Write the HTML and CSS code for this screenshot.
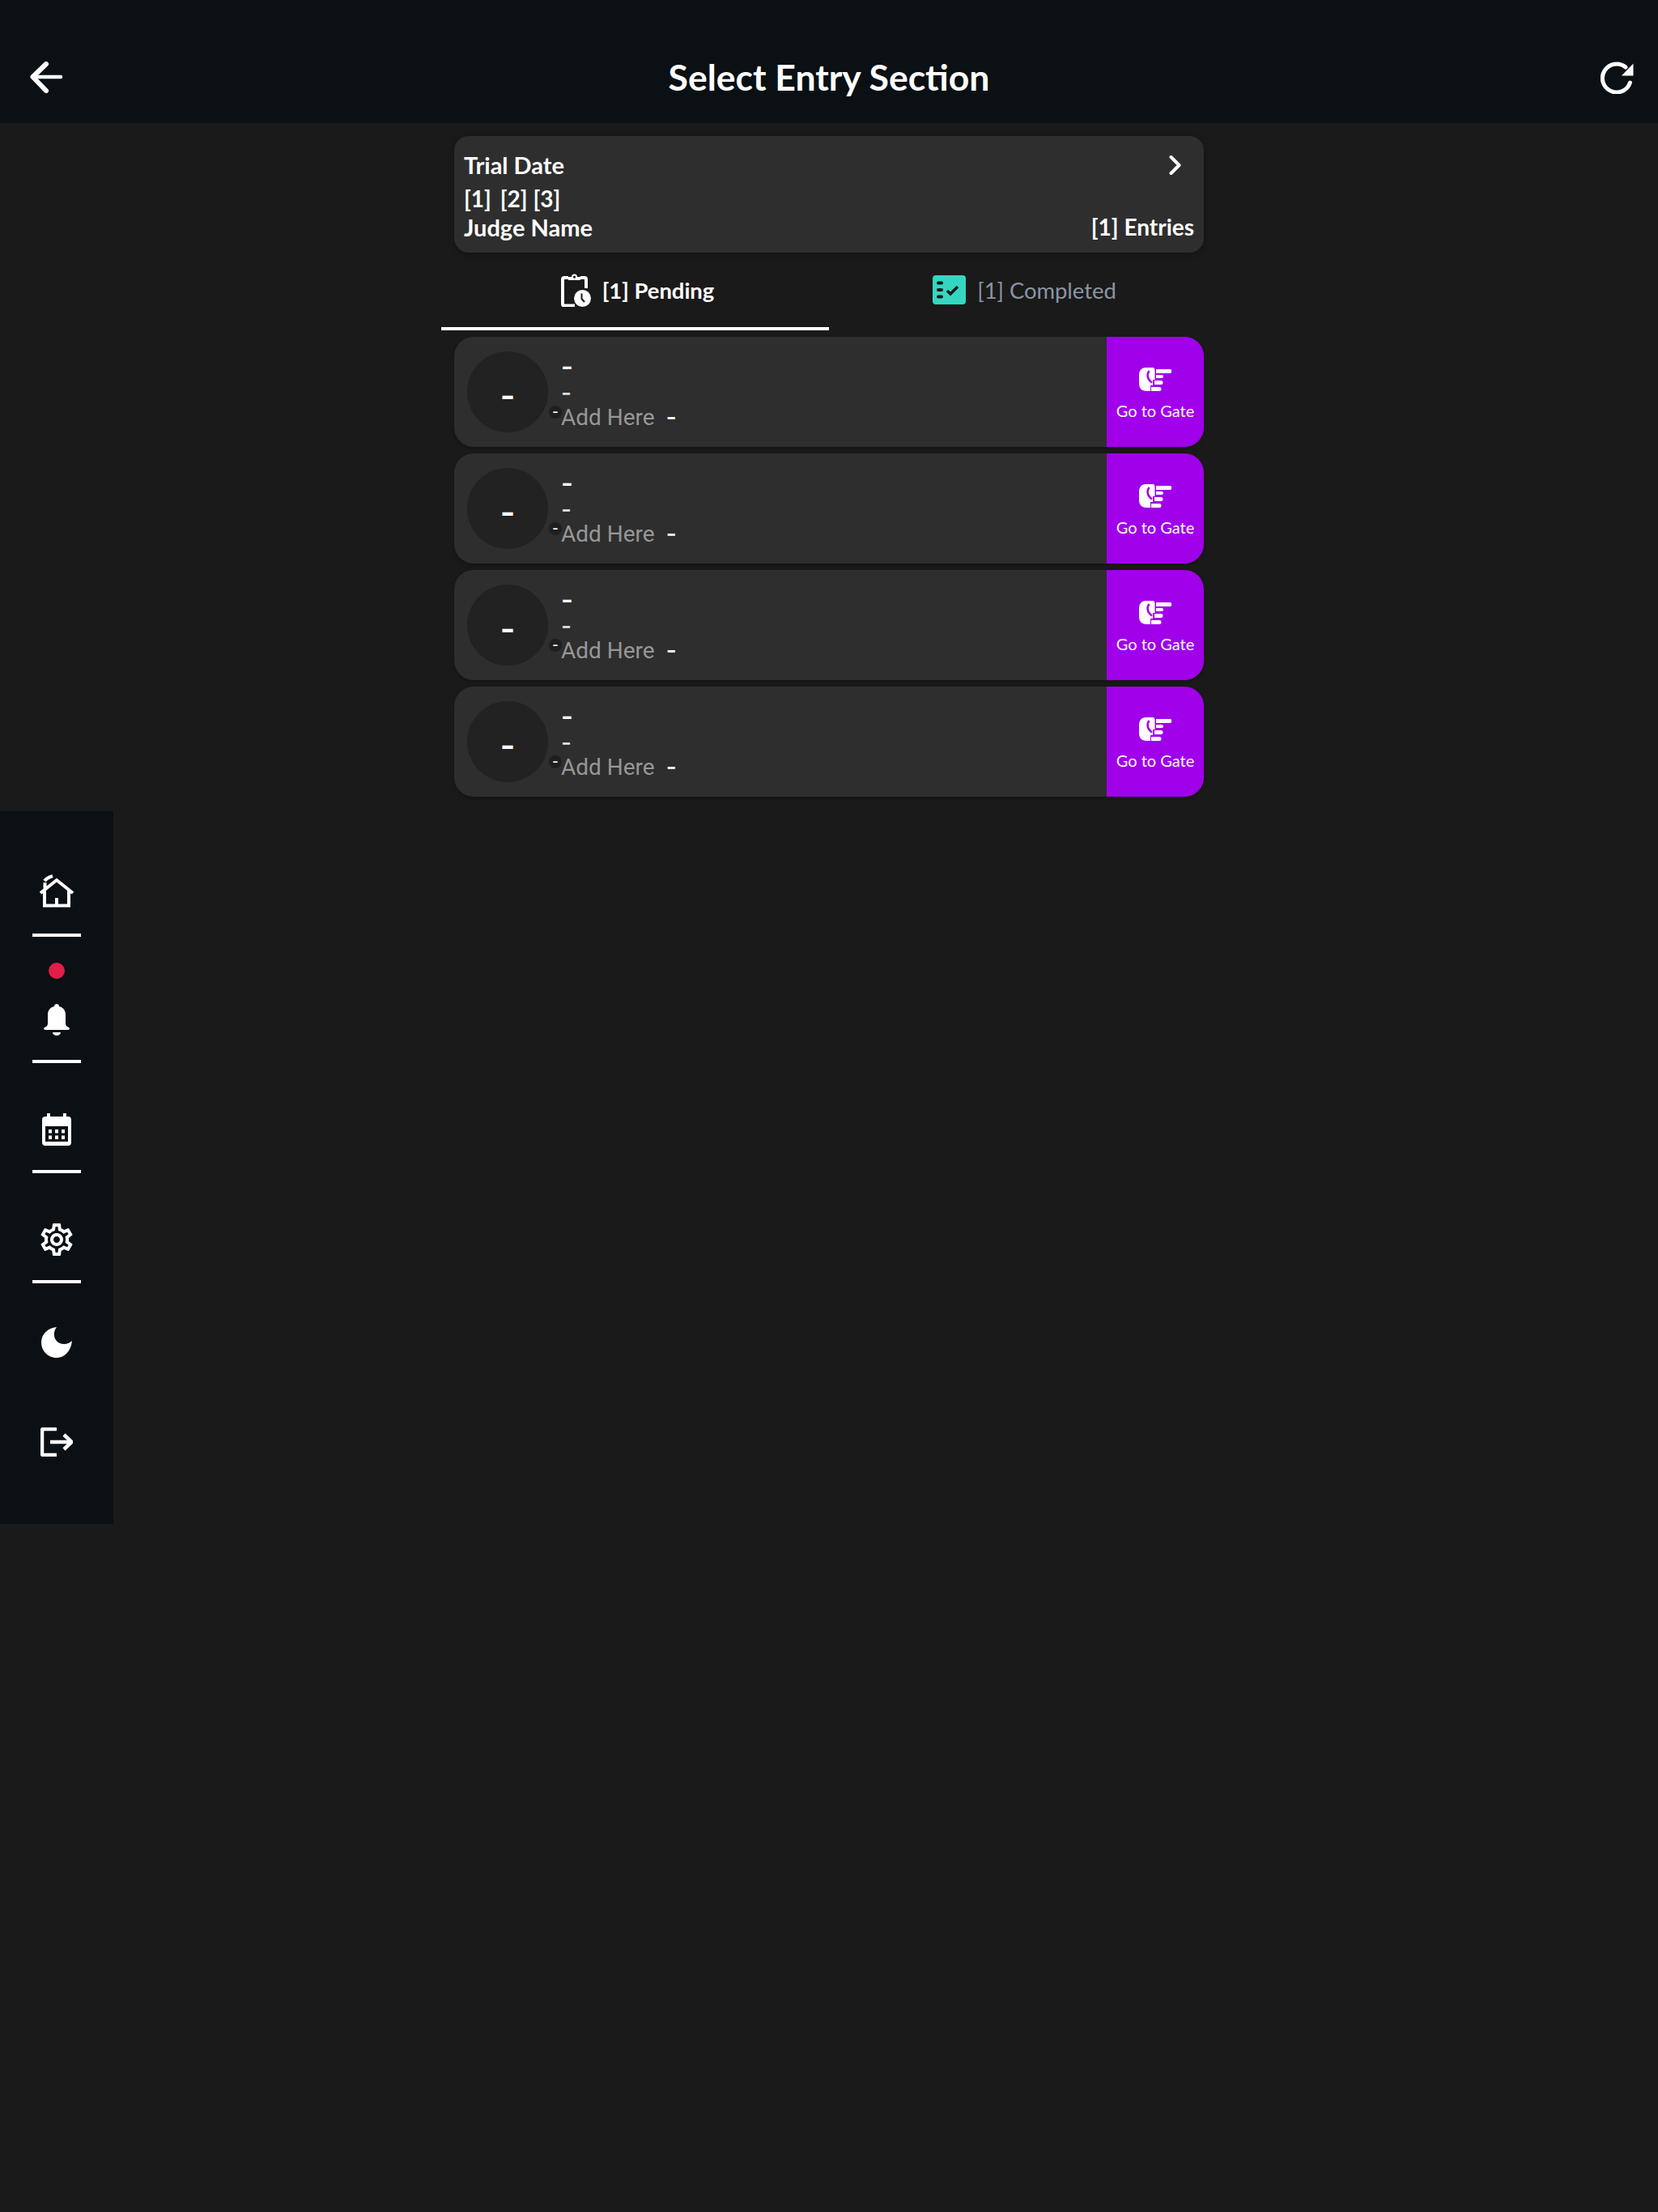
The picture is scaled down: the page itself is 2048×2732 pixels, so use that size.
FILE: index.html
```html
<!DOCTYPE html>
<html lang="en">
<head>
    <meta charset="UTF-8">
    <meta name="viewport" content="width=device-width, initial-scale=1.0">
    <title>Select Entry Section</title>
    <link rel="stylesheet" href="styles.css">
</head>
<body>

    <!-- Shared hand icon for the gate buttons -->
    <svg class="defs" width="0" height="0">
        <symbol id="hand" viewBox="0 0 40 30">
            <path d="M8 0h9c2 0 2.500 2 2.500 4v11H17v7h-3v7H9c-6 0-9-4-9-9V9c0-5 3-9 8-9zM21 2h17a2.500 2.500 0 0 1 0 5H21zM21 9h7a2 2 0 0 1 0 4h-7zM19 16h8a2.500 2.500 0 0 1 0 5h-8zM15 24h10a2.500 2.500 0 0 1 0 5H15z"/>
            <path class="notch" d="M12.500 4C9.500 8 9.500 14 16 18.500"/>
        </symbol>
    </svg>

    <header class="topbar">
        <svg class="back-icon" viewBox="0 0 41 40"><path class="shaft" d="M4 19h34"/><path d="M20 3 3.500 19 20 36"/></svg>
        <h1>Select Entry Section</h1>
        <svg class="refresh-icon" viewBox="0 0 41 40"><path class="arc" d="M31 7A17.500 17.500 0 1 0 36.500 26"/><path d="M40.500 2.500v15H26z"/></svg>
    </header>

    <!-- Side rail sits over the page -->
    <nav class="rail">
        <svg class="nav-home" viewBox="0 0 44 41"><path d="M2 23 22 7l20 16M7 20v18.500h30V20M22 29v9M7.500 19v-9"/><path d="M7 8q3-4 10-6"/></svg>
        <span class="rail-line line-home"></span>
        <span class="red-dot"></span>
        <svg class="nav-bell" viewBox="0 0 32 39"><path d="M16 0c1.800 0 3 1.200 3 3 4.800 1.200 8 5 8 10v11c0 2 1 3.500 3 4.500 1.500.7 2 1.500 2 2s-.8 1.500-2 1.500H2c-1.200 0-2-.8-2-1.500s.5-1.300 2-2c2-1 3-2.500 3-4.500V13c0-5 3.200-8.800 8-10 0-1.800 1.200-3 3-3zM11 35h10c0 2-2 4-5 4s-5-2-5-4z"/></svg>
        <span class="rail-line"></span>
        <svg class="nav-calendar" viewBox="0 0 36 40"><path fill-rule="evenodd" d="M6 0h4v4h16V0h4v4h2a4 4 0 0 1 4 4v28a4 4 0 0 1-4 4H4a4 4 0 0 1-4-4V8a4 4 0 0 1 4-4h2zM4 16v19h28V16zM8 20h4v4.500H8zM16 20h4v4.500h-4zM24 20h4v4.500h-4zM8 27.500h4V32H8zM16 27.500h4V32h-4zM24 27.500h4V32h-4z"/></svg>
        <span class="rail-line"></span>
        <svg class="nav-gear" viewBox="2 2 20 20"><path d="M19.430 12.980c.04-.32.07-.64.07-.98s-.03-.66-.07-.98l2.110-1.650c.19-.15.24-.42.12-.64l-2-3.460c-.12-.22-.39-.3-.61-.22l-2.490 1c-.52-.4-1.080-.73-1.690-.98l-.38-2.650C14.460 2.180 14.250 2 14 2h-4c-.25 0-.46.18-.49.42l-.38 2.650c-.61.25-1.170.59-1.690.98l-2.490-1c-.23-.09-.49 0-.61.22l-2 3.460c-.13.22-.07.49.12.64l2.110 1.650c-.04.32-.07.65-.07.98s.03.66.07.98l-2.110 1.650c-.19.15-.24.42-.12.64l2 3.460c.12.22.39.3.61.22l2.490-1c.52.4 1.080.73 1.690.98l.38 2.650c.03.24.24.42.49.42h4c.25 0 .46-.18.49-.42l.38-2.650c.61-.25 1.170-.59 1.690-.98l2.490 1c.23.09.49 0 .61-.22l2-3.460c.12-.22.07-.49-.12-.64l-2.110-1.650zM17.450 11.270c.04.31.05.52.05.73 0 .21-.02.43-.05.73l-.14 1.130.89.7 1.080.84-.7 1.210-1.270-.51-1.040-.42-.9.68c-.43.32-.84.56-1.250.73l-1.060.43-.16 1.130-.2 1.350h-1.400l-.19-1.350-.16-1.130-1.060-.43c-.43-.18-.83-.41-1.230-.71l-.91-.7-1.060.43-1.270.51-.7-1.210 1.080-.84.89-.7-.14-1.130c-.03-.31-.05-.54-.05-.74s.02-.43.05-.73l.14-1.130-.89-.7-1.080-.84.7-1.210 1.270.51 1.040.42.9-.68c.43-.32.84-.56 1.250-.73l1.060-.43.16-1.130.2-1.350h1.390l.19 1.350.16 1.130 1.060.43c.43.18.83.41 1.230.71l.91.7 1.060-.43 1.270-.51.7 1.210-1.070.85-.89.7.14 1.130zM12 8c-2.210 0-4 1.790-4 4s1.790 4 4 4 4-1.790 4-4-1.790-4-4-4zm0 6c-1.100 0-2-.9-2-2s.9-2 2-2 2 .9 2 2-.9 2-2 2z"/></svg>
        <span class="rail-line"></span>
        <svg class="nav-moon" viewBox="0 0 38 38"><path d="M19 0c-4 5-4 12-1 16 4 6 14 7 20 1-1 12-9 21-19 21C8 38 0 29 0 19 0 9 8 1 19 0z"/></svg>
        <svg class="nav-logout" viewBox="0 0 40 36"><path d="M20 2H3.500A1.500 1.500 0 0 0 2 3.500v29A1.500 1.500 0 0 0 3.500 34H20M12 18h26M29 9l9.500 9-9.500 9"/></svg>
    </nav>

    <main class="content">
        <section class="trial-card">
            <div class="trial-row date-row">
                <span>Trial Date</span>
                <svg class="chevron" viewBox="0 0 15 24"><path d="M2.500 2 12.500 12 2.500 22"/></svg>
            </div>
            <div class="trial-row numbers-row"><span class="num-first">[1]</span><span class="num-mid">[2]</span><span>[3]</span></div>
            <div class="trial-row">
                <span>Judge Name</span>
                <span class="entries-count">[1] Entries</span>
            </div>
        </section>

        <div class="tabs">
            <div class="tab active">
                <svg class="tab-clip" viewBox="0 0 37 42"><path class="clip-line" d="M9 6H4a2 2 0 0 0-2 2v30.500a2 2 0 0 0 2 2h13M24 6h5a2 2 0 0 1 2 2v11"/><path fill-rule="evenodd" d="M9 9V5h4a3.500 3.500 0 0 1 7 0h4v4zM16.500 3.500a1.600 1.600 0 1 0 0 3.200 1.600 1.600 0 0 0 0-3.200z"/><circle cx="26.500" cy="31.500" r="10.500"/><path class="clock-hand" d="M25.500 25.500v6.500l3.500 4"/></svg>
                <span>[1] Pending</span>
            </div>
            <div class="tab">
                <svg class="tab-check" viewBox="0 0 41 36"><rect width="41" height="36" rx="4"/><path class="check-dots" d="M7 9.500h4M7 18h4M7 26.500h4"/><path class="check-mark" d="M18 19l4 4 9-9"/></svg>
                <span>[1] Completed</span>
            </div>
        </div>

        <div class="entry-list">
            <div class="entry">
                <div class="entry-info">
                    <div class="avatar">-<span class="mini-badge">-</span></div>
                    <div class="entry-text">
                        <span class="line-main">-</span>
                        <span class="line-sub">-</span>
                        <span class="line-add">Add Here<b>-</b></span>
                    </div>
                </div>
                <div class="gate-btn">
                    <svg class="hand"><use href="#hand"/></svg>
                    <span>Go to Gate</span>
                </div>
            </div>
            <div class="entry">
                <div class="entry-info">
                    <div class="avatar">-<span class="mini-badge">-</span></div>
                    <div class="entry-text">
                        <span class="line-main">-</span>
                        <span class="line-sub">-</span>
                        <span class="line-add">Add Here<b>-</b></span>
                    </div>
                </div>
                <div class="gate-btn">
                    <svg class="hand"><use href="#hand"/></svg>
                    <span>Go to Gate</span>
                </div>
            </div>
            <div class="entry">
                <div class="entry-info">
                    <div class="avatar">-<span class="mini-badge">-</span></div>
                    <div class="entry-text">
                        <span class="line-main">-</span>
                        <span class="line-sub">-</span>
                        <span class="line-add">Add Here<b>-</b></span>
                    </div>
                </div>
                <div class="gate-btn">
                    <svg class="hand"><use href="#hand"/></svg>
                    <span>Go to Gate</span>
                </div>
            </div>
            <div class="entry">
                <div class="entry-info">
                    <div class="avatar">-<span class="mini-badge">-</span></div>
                    <div class="entry-text">
                        <span class="line-main">-</span>
                        <span class="line-sub">-</span>
                        <span class="line-add">Add Here<b>-</b></span>
                    </div>
                </div>
                <div class="gate-btn">
                    <svg class="hand"><use href="#hand"/></svg>
                    <span>Go to Gate</span>
                </div>
            </div>
        </div>
    </main>

</body>
</html>
```

FILE: styles.css
```css
/* General */
html, body {
    margin: 0;
    padding: 0;
}

body {
    position: relative;
    min-height: 2732px;
    background: #1a1a1a;
    color: #fff;
    font-family: 'Lato', sans-serif;
    font-weight: 700;
}

svg {
    display: block;
    flex: none;
    fill: #fff;
}

.defs {
    position: absolute;
}

/* Top bar */
.topbar {
    display: flex;
    align-items: flex-end;
    justify-content: space-between;
    height: 152px;
    padding: 0 30px 36px 37px;
    box-sizing: border-box;
    background: #0a1014;
}

.topbar h1 {
    margin: 0 7px -5px 0;
    font-size: 44.500px;
    font-weight: 700;
    line-height: 52px;
}

.back-icon {
    width: 41px;
    height: 40px;
    fill: none;
    stroke: #fff;
    stroke-width: 6;
    stroke-linecap: round;
    stroke-linejoin: round;
}

.back-icon .shaft {
    stroke-width: 4.500;
}

.refresh-icon {
    width: 41px;
    height: 40px;
}

.refresh-icon .arc {
    fill: none;
    stroke: #fff;
    stroke-width: 5;
    stroke-linecap: round;
}

/* Side rail */
.rail {
    position: absolute;
    left: 0;
    top: 1002px;
    display: flex;
    flex-direction: column;
    align-items: center;
    width: 140px;
    height: 880px;
    padding-top: 78px;
    box-sizing: border-box;
    background: #0a1014;
}

.rail-line {
    width: 60px;
    height: 4px;
    margin-top: 30px;
    background: #fff;
}

.line-home {
    margin-top: 32px;
}

.red-dot {
    width: 20px;
    height: 20px;
    margin-top: 32px;
    border-radius: 50%;
    background: #e11d48;
}

.nav-home {
    width: 44px;
    height: 41px;
    fill: none;
    stroke: #fff;
    stroke-width: 4;
}

.nav-bell {
    width: 32px;
    height: 39px;
    margin-top: 31px;
}

.nav-calendar {
    width: 36px;
    height: 40px;
    margin-top: 62px;
}

.nav-gear {
    width: 40px;
    height: 40px;
    margin-top: 62px;
}

.nav-moon {
    width: 38px;
    height: 38px;
    margin-top: 54px;
}

.nav-logout {
    width: 40px;
    height: 36px;
    margin-top: 86px;
    fill: none;
    stroke: #fff;
    stroke-width: 4.500;
}

/* Main column */
.content {
    width: 926px;
    margin: 16px auto 0;
}

.trial-card {
    display: flex;
    flex-direction: column;
    height: 144px;
    padding: 18px 12px 0;
    box-sizing: border-box;
    border-radius: 18px;
    background: #2e2e2e;
    box-shadow: 0 2px 6px rgba(0, 0, 0, 0.3);
    font-size: 29px;
    line-height: 35px;
}

.trial-row {
    display: flex;
    align-items: center;
    justify-content: space-between;
}

.date-row {
    padding-right: 16px;
    margin-bottom: 7px;
}

.numbers-row {
    justify-content: flex-start;
    font-size: 28px;
}

.num-first {
    margin-right: 11px;
}

.num-mid {
    margin-right: 7px;
}

.entries-count {
    font-size: 28px;
}

.chevron {
    width: 15px;
    height: 24px;
    fill: none;
    stroke: #fff;
    stroke-width: 4;
    stroke-linecap: round;
    stroke-linejoin: round;
}

/* Tabs */
.tabs {
    display: flex;
    width: 958px;
    margin-left: -16px;
}

.tab {
    display: flex;
    flex: 0 0 50%;
    align-items: center;
    justify-content: center;
    gap: 14px;
    height: 96px;
    padding: 0 0 4px 4px;
    box-sizing: border-box;
    color: #8b95a3;
    font-size: 27.400px;
    font-weight: 400;
}

.tab span {
    margin-top: 1px;
}

.tab.active {
    padding: 0 0 0 6px;
    border-bottom: 4px solid #fff;
    color: #fff;
    font-weight: 700;
}

.tab-clip {
    width: 37px;
    height: 42px;
}

.clip-line {
    fill: none;
    stroke: #fff;
    stroke-width: 4;
}

.clock-hand {
    fill: none;
    stroke: #1a1a1a;
    stroke-width: 2;
}

.tab-check {
    width: 41px;
    height: 36px;
    fill: #35d6c0;
}

.check-dots {
    fill: none;
    stroke: #1a1a1a;
    stroke-width: 4;
    stroke-linecap: round;
}

.check-mark {
    fill: none;
    stroke: #1a1a1a;
    stroke-width: 3.500;
}

/* Entries */
.entry-list {
    display: flex;
    flex-direction: column;
    gap: 8px;
    margin-top: 8px;
}

.entry {
    display: flex;
    height: 136px;
    border-radius: 24px;
    background: #2e2e2e;
    box-shadow: 0 2px 4px rgba(0, 0, 0, 0.25);
    overflow: hidden;
}

.entry-info {
    display: flex;
    flex: 1;
    align-items: center;
    padding-left: 16px;
}

.avatar {
    position: relative;
    display: flex;
    align-items: center;
    justify-content: center;
    width: 100px;
    height: 100px;
    padding-top: 8px;
    box-sizing: border-box;
    border-radius: 50%;
    background: #222;
    font-family: 'Inter', sans-serif;
    font-size: 40px;
    font-weight: 600;
}

.mini-badge {
    position: absolute;
    left: 101px;
    top: 67px;
    width: 16px;
    height: 16px;
    border-radius: 50%;
    background: #1f1f1f;
    font-size: 16px;
    line-height: 15px;
    text-align: center;
}

.entry-text {
    display: flex;
    flex-direction: column;
    margin-left: 16px;
    font-family: 'Inter', sans-serif;
    font-weight: 600;
}

.line-main {
    height: 34px;
    font-size: 32px;
    line-height: 34px;
}

.line-sub {
    height: 28px;
    color: #ddd;
    font-size: 28px;
    line-height: 30px;
    font-weight: 500;
}

.line-add {
    height: 36px;
    margin-top: -1px;
    color: #979797;
    font-family: 'Roboto', sans-serif;
    font-size: 28px;
    font-weight: 400;
    line-height: 36px;
}

.line-add b {
    margin-left: 14px;
    color: #fff;
    font-family: 'Inter', sans-serif;
    font-weight: 500;
}

/* Go to Gate button */
.gate-btn {
    display: flex;
    flex: none;
    flex-direction: column;
    align-items: center;
    gap: 11px;
    width: 120px;
    padding-top: 38px;
    box-sizing: border-box;
    background: #a000ea;
    font-size: 20px;
    font-weight: 400;
}

.hand {
    width: 40px;
    height: 30px;
}

.notch {
    fill: none;
    stroke: #a000ea;
    stroke-width: 2.500;
}
```
